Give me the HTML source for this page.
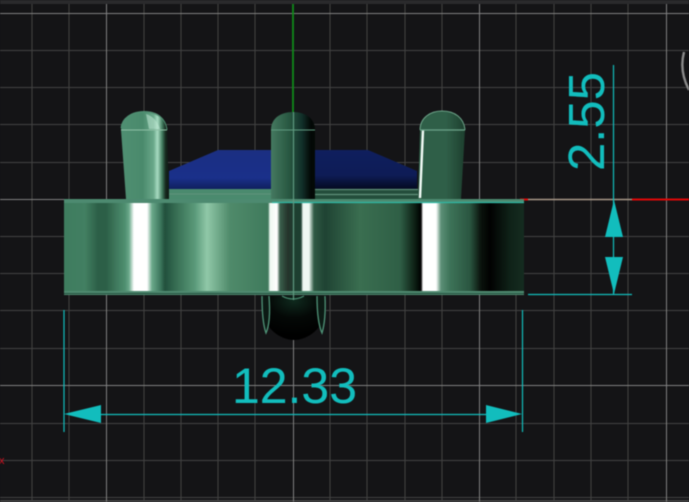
<!DOCTYPE html>
<html><head><meta charset="utf-8"><style>
html,body{margin:0;padding:0;background:#141416;width:689px;height:502px;overflow:hidden}
svg{display:block;filter:blur(.45px)}
text{font-family:"Liberation Sans",sans-serif;fill:#12bdbd;stroke:#12bdbd;stroke-width:.1}
</style></head><body>
<svg width="689" height="502" viewBox="0 0 689 502" xmlns="http://www.w3.org/2000/svg">
<defs>
<linearGradient id="b" gradientUnits="userSpaceOnUse" x1="0" x2="1000" y1="0" y2="0">
<stop offset=".064" stop-color="#3f7d5f"/>
<stop offset=".085" stop-color="#427f62"/>
<stop offset=".098" stop-color="#2c5f47"/>
<stop offset=".106" stop-color="#2c5f47"/>
<stop offset=".125" stop-color="#4f8f70"/>
<stop offset=".129" stop-color="#6aa88a"/>
<stop offset=".134" stop-color="#fff"/>
<stop offset=".147" stop-color="#fff"/>
<stop offset=".152" stop-color="#6aa88a"/>
<stop offset=".160" stop-color="#3f7a60"/>
<stop offset=".165" stop-color="#22503c"/>
<stop offset=".175" stop-color="#356b52"/>
<stop offset=".195" stop-color="#5a9a7a"/>
<stop offset=".207" stop-color="#90c8a8"/>
<stop offset=".230" stop-color="#4f8a6a"/>
<stop offset=".268" stop-color="#3f7a5c"/>
<stop offset=".270" stop-color="#eef8f2"/>
<stop offset=".277" stop-color="#fff"/>
<stop offset=".280" stop-color="#3a5f4c"/>
<stop offset=".288" stop-color="#24332b"/>
<stop offset=".295" stop-color="#1d3f30"/>
<stop offset=".301" stop-color="#1d3f30"/>
<stop offset=".303" stop-color="#eef8f2"/>
<stop offset=".309" stop-color="#eef8f2"/>
<stop offset=".314" stop-color="#2f5a44"/>
<stop offset=".325" stop-color="#1f4333"/>
<stop offset=".360" stop-color="#3a6e50"/>
<stop offset=".400" stop-color="#2f5f46"/>
<stop offset=".416" stop-color="#0a1a10"/>
<stop offset=".421" stop-color="#000"/>
<stop offset=".423" stop-color="#fff"/>
<stop offset=".436" stop-color="#fff"/>
<stop offset=".441" stop-color="#5b8f76"/>
<stop offset=".450" stop-color="#3d7358"/>
<stop offset=".470" stop-color="#2a5540"/>
<stop offset=".481" stop-color="#0a120c"/>
<stop offset=".490" stop-color="#010101"/>
<stop offset=".510" stop-color="#0f2218"/>
<stop offset=".524" stop-color="#152c20"/>
</linearGradient>
<linearGradient id="p1" x1="0" x2="1" y1="0" y2="0">
<stop offset="0" stop-color="#4f8f72"/><stop offset=".45" stop-color="#4a8a6c"/>
<stop offset=".68" stop-color="#6aa88a"/><stop offset=".76" stop-color="#a8dcc2"/>
<stop offset=".86" stop-color="#417a5e"/><stop offset=".93" stop-color="#16281e"/><stop offset="1" stop-color="#0d1a12"/>
</linearGradient>
<linearGradient id="p2" x1="0" x2="1" y1="0" y2="0">
<stop offset="0" stop-color="#457a60"/><stop offset=".45" stop-color="#25533e"/>
<stop offset=".7" stop-color="#12302a"/><stop offset=".9" stop-color="#030806"/><stop offset="1" stop-color="#040a06"/>
</linearGradient>
<linearGradient id="p3" x1="0" x2="1" y1="0" y2="0">
<stop offset="0" stop-color="#2f5f48"/><stop offset=".6" stop-color="#2f5f48"/>
<stop offset="1" stop-color="#1d3f2e"/>
</linearGradient>
<linearGradient id="bl" x1="0" x2="0" y1="0" y2="1">
<stop offset="0" stop-color="#1b2f82"/><stop offset=".72" stop-color="#1a308a"/><stop offset="1" stop-color="#10205e"/>
</linearGradient>
<linearGradient id="br" x1="0" x2="0" y1="0" y2="1">
<stop offset="0" stop-color="#0f1f5e"/><stop offset=".65" stop-color="#0e1c56"/><stop offset="1" stop-color="#040a20"/>
</linearGradient>
<radialGradient id="k" cx=".5" cy=".1" r=".8">
<stop offset="0" stop-color="#0f2a1e"/><stop offset=".5" stop-color="#040806"/><stop offset="1" stop-color="#000"/>
</radialGradient>
</defs>

<rect width="689" height="502" fill="#141416"/>
<rect width="689" height="4" fill="#2a2a2c"/>
<rect y="500" width="689" height="2" fill="#444"/>

<g stroke="#434343" stroke-width="1">
<path d="M32 4V502M69 4V502M144 4V502M181 4V502M218 4V502M255 4V502M330 4V502M367 4V502M405 4V502M442 4V502M516 4V502M554 4V502M591 4V502M628 4V502"/>
<path d="M0 50.500H689M0 87.500H689M0 124.500H689M0 162.500H689M0 236.500H689M0 273.500H689M0 310.500H689M0 348.500H689M0 423.500H689M0 460.500H689M0 497.500H689"/>
</g>
<g stroke="#808080" stroke-width="1">
<path d="M106.500 4V502M293.500 200V502M479.500 4V502M666.500 4V502"/>
<path d="M0 13.500H689M0 199.500H689M0 385.500H689"/>
</g>

<path d="M293 4V200" stroke="#0f8a1a" stroke-width="1.800"/>
<path d="M632 199.500H689" stroke="#e00808" stroke-width="2"/>
<path d="M528 199.500H632" stroke="#a89888" stroke-width="1.500"/>
<path d="M520 199.500H528" stroke="#e00808" stroke-width="2"/>

<path d="M684 52Q679 71 689 90" fill="none" stroke="#8a8a8a" stroke-width="2.400"/>
<text x="-1" y="464" font-size="11" style="fill:#d01020;stroke:none">x</text>

<!-- under part -->
<path d="M262 296H326V310C324 328 308 340 294 340C280 340 264 328 262 310Z" fill="url(#k)"/>
<path d="M262 296Q262 322 266 333Q271 322 269 296" fill="#0c1a14" stroke="#4f9478" stroke-width="1.300"/>
<path d="M317 296Q317 322 322 333Q326 320 325 296" fill="#0c1a14" stroke="#4f9478" stroke-width="1.300"/>
<path d="M282 296Q293 302 304 296" fill="none" stroke="#4f9478" stroke-width="1"/>

<!-- blue -->
<path d="M169 171L218 150H272V189H169Z" fill="url(#bl)"/>
<path d="M315 150H368L417 171V189H315Z" fill="url(#br)"/>
<rect x="169" y="189" width="103" height="11" fill="#4a8a6e"/>
<path d="M169 194H272" stroke="#5f927c" stroke-width="1"/>
<rect x="315" y="189" width="103" height="11" fill="#234e3b"/>
<path d="M315 189.500H418M315 194.500H418" stroke="#5f907a" stroke-width="1.200"/>

<!-- pins -->
<path d="M121 130C121 118 131 111 144 111C158 111 167 119 167 130L169 199H126Z" fill="url(#p1)"/>
<path d="M146 114C153 116 158 122 160 129H149Z" fill="#bfe8d4" opacity=".55"/>
<path d="M121 130H167" stroke="#8fc0a6" stroke-width="1"/>
<path d="M121 128C122 118 131 112 144 112C158 112 166 119 167 130" fill="none" stroke="#4f8f72" stroke-width="1"/>
<path d="M271 130C271 118 281 112 293 112C305 112 315 118 315 130V200H271Z" fill="url(#p2)"/>
<path d="M271 130H315" stroke="#5f9a80" stroke-width="1"/>
<path d="M420 130C420 118 430 111 442 111C455 111 464 118 465 130L461 199H418Z" fill="url(#p3)"/>
<path d="M423 130L420 198" stroke="#f2fbf6" stroke-width="2.400"/>
<path d="M420 130H465" stroke="#6da58a" stroke-width="1.200"/>
<path d="M420 130C420 118 430 111 442 111C455 111 464 118 465 130" fill="none" stroke="#6da58a" stroke-width="1"/>

<!-- body -->
<rect x="64" y="200" width="460" height="92" fill="url(#b)"/>
<rect x="64" y="199" width="460" height="4" fill="#4d8a70"/>
<path d="M272 202.500H524" stroke="#2fb8a4" stroke-width="1.200"/>
<rect x="64" y="291" width="460" height="4" fill="#4f8a70"/>
<path d="M64 293.500H524" stroke="#24503e" stroke-width="1"/>
<path d="M293.500 112V300" stroke="#5f9a80" stroke-width="1.200"/>

<!-- dimensions -->
<g stroke="#12bdbd" stroke-width="1.200" fill="none">
<path d="M64 310V432M522.500 310V432M100 414.500H487"/>
<path d="M613.500 65V295M528 294.500H632"/>
</g>
<g fill="#12bdbd">
<path d="M64 414L101 405V423Z"/>
<path d="M522 414L486 405V423Z"/>
<path d="M614 200L623 237H605Z"/>
<path d="M614 294L623 257H605Z"/>
</g>
<text x="294.500" y="403" font-size="50" text-anchor="middle" textLength="125" lengthAdjust="spacingAndGlyphs">12.33</text>
<text transform="translate(604 171) rotate(-90)" x="0" y="0" font-size="51" textLength="99" lengthAdjust="spacingAndGlyphs">2.55</text>
</svg>
</body></html>
